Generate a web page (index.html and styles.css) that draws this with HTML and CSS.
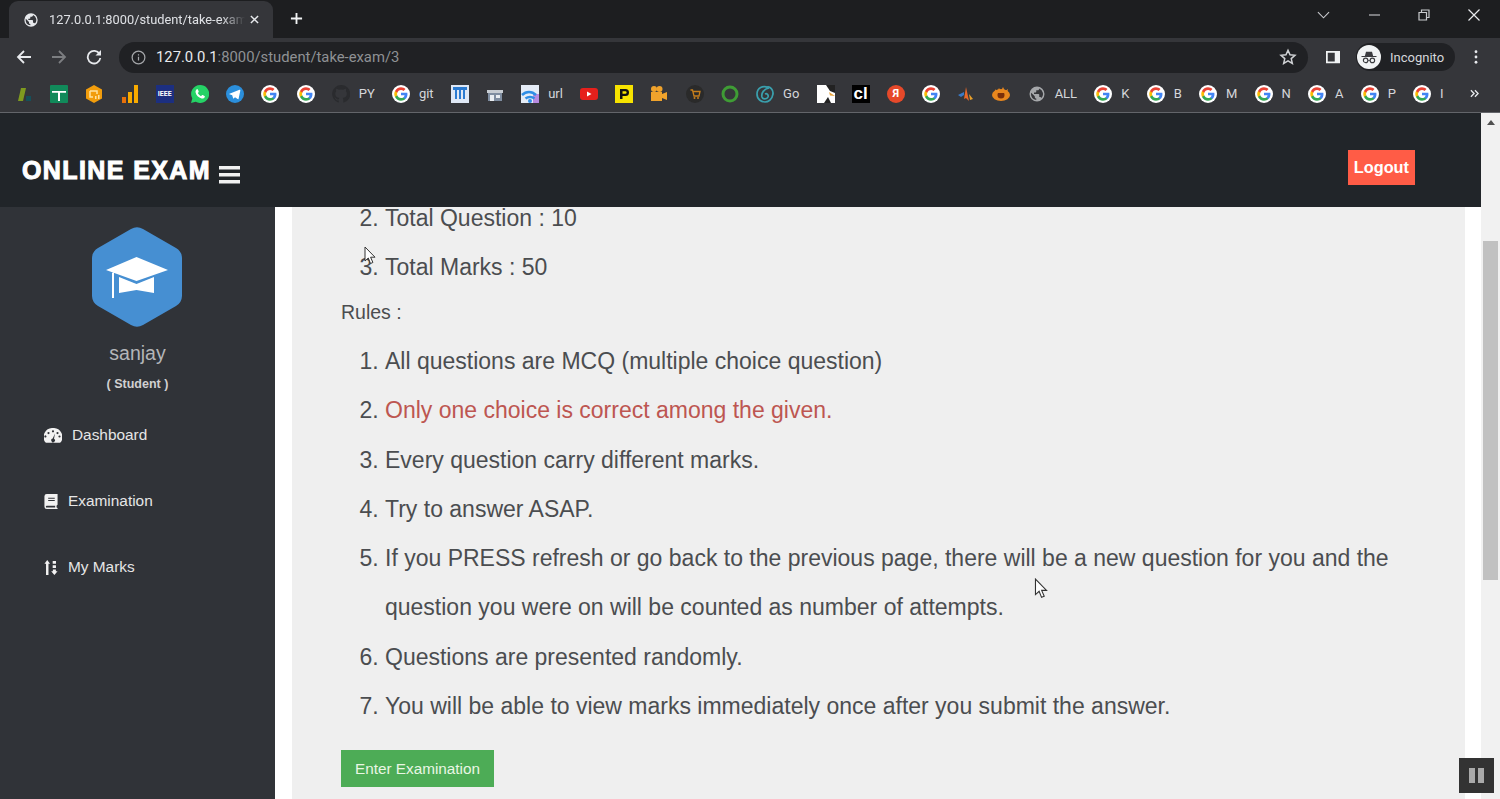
FILE: index.html
```html
<!DOCTYPE html>
<html lang="en">
<head>
    <meta charset="UTF-8">
    <meta name="viewport" content="width=device-width, initial-scale=1.0">
    <title>Online Exam</title>
    <link rel="stylesheet" href="styles.css">
</head>
<body>

    <svg class="defs" width="0" height="0">
        <symbol id="google" viewBox="0 0 24 24">
            <circle cx="12" cy="12" r="12" fill="#fff"/>
            <path fill="#4285f4" d="M20.6 12.2c0-.6-.1-1.200-.2-1.800H12v3.400h4.800c-.2 1.100-.8 2-1.800 2.700v2.200h2.900c1.700-1.600 2.700-3.800 2.700-6.500z"/>
            <path fill="#34a853" d="M12 21c2.400 0 4.500-.8 5.900-2.200L15 16.500c-.8.5-1.800.9-3 .9-2.300 0-4.300-1.600-5-3.700H4v2.300C5.500 19 8.500 21 12 21z"/>
            <path fill="#fbbc05" d="M7 13.700c-.4-1.100-.4-2.300 0-3.400V8H4c-1.300 2.500-1.300 5.500 0 8z"/>
            <path fill="#ea4335" d="M12 6.600c1.300 0 2.500.5 3.400 1.300L18 5.400C16.500 4 14.400 3 12 3 8.500 3 5.500 5 4 8l3 2.300c.7-2.100 2.700-3.700 5-3.700z"/>
        </symbol>
        <symbol id="globe" viewBox="0 0 24 24">
            <path fill="currentColor" d="M12 2a10 10 0 1 0 0 20 10 10 0 0 0 0-20zM4 12c0-.6.1-1.200.2-1.800L9 15v1c0 1.100.9 2 2 2v1.900A8 8 0 0 1 4 12zm13.900 5.400c-.3-.8-1-1.400-1.900-1.400h-1v-3c0-.6-.4-1-1-1H8v-2h2c.6 0 1-.4 1-1V7h2c1.100 0 2-.9 2-2v-.4a8 8 0 0 1 2.900 12.800z"/>
        </symbol>
    </svg>

    <div class="tab-strip">
        <div class="tab">
            <svg class="tab-icon"><use href="#globe"/></svg>
            <span class="tab-title">127.0.0.1:8000/student/take-exam/3</span>
            <svg class="tab-close" viewBox="0 0 10 10"><path d="M1 1l8 8M9 1l-8 8"/></svg>
        </div>
        <svg class="new-tab" viewBox="0 0 14 14"><path d="M7 1v12M1 7h12"/></svg>
        <div class="window-controls">
            <svg class="win-chevron" viewBox="0 0 14 8"><path d="M1 1l6 6 6-6"/></svg>
            <svg class="win-min" viewBox="0 0 12 2"><path d="M0 1h12"/></svg>
            <svg class="win-restore" viewBox="0 0 12 12"><path d="M1 3.500h7.500V11H1zM3.500 3.500V1H11v7.500H8.500"/></svg>
            <svg class="win-close" viewBox="0 0 12 12"><path d="M.5.500l11 11M11.500.500l-11 11"/></svg>
        </div>
    </div>

    <div class="toolbar">
        <svg class="nav-icon" viewBox="0 0 16 16"><path d="M15 8H2M8 2L2 8l6 6"/></svg>
        <svg class="nav-icon nav-off" viewBox="0 0 16 16"><path d="M1 8h13M8 2l6 6-6 6"/></svg>
        <svg class="nav-icon" viewBox="0 0 16 16"><path d="M13.500 5A6.300 6.300 0 1 0 14.300 9"/><path class="solid" d="M15 1v5.500H9.500z"/></svg>
        <div class="omnibox">
            <svg class="info-icon" viewBox="0 0 16 16"><circle cx="8" cy="8" r="6.800"/><path d="M8 7.200v4M8 4.400v1.400"/></svg>
            <span class="url"><b>127.0.0.1</b>:8000/student/take-exam/3</span>
            <svg class="star-icon" viewBox="0 0 24 24"><path d="M12 3l2.700 6.100 6.600.6-5 4.400 1.500 6.500L12 17.200l-5.800 3.400 1.500-6.500-5-4.400 6.600-.6z"/></svg>
        </div>
        <svg class="panel-icon" viewBox="0 0 16 16"><path fill-rule="evenodd" d="M0 1h16v14H0zM2 3v10h8V3z"/></svg>
        <div class="profile">
            <span class="avatar">
                <svg viewBox="0 0 24 24"><path d="M8 5h8l1.500 5.500H22V12H2v-1.500h4.500z"/><circle cx="7.500" cy="16.500" r="3" class="ring"/><circle cx="16.500" cy="16.500" r="3" class="ring"/><path d="M10.500 16h3v1h-3z"/></svg>
            </span>
            <span>Incognito</span>
        </div>
        <svg class="menu-dots" viewBox="0 0 4 16"><circle cx="2" cy="2" r="1.600"/><circle cx="2" cy="8" r="1.600"/><circle cx="2" cy="14" r="1.600"/></svg>
    </div>

    <div class="bookmarks">
        <svg class="bm" viewBox="0 0 18 18"><path fill="#7f9a1f" d="M3 16L6 3h5L8 16z"/><path fill="#15505a" d="M11 11h5v5h-5z"/></svg>
        <svg class="bm" viewBox="0 0 18 18"><rect width="18" height="18" rx="1" fill="#118a5a"/><path fill="#fff" d="M2 6h14v1.800h-6V16H8V7.800H2z"/></svg>
        <svg class="bm" viewBox="0 0 18 18"><path fill="#f29d0c" d="M9 0l8 4.500v9L9 18l-8-4.500v-9z"/><path fill="none" stroke="#ffe2a0" stroke-width="1.500" d="M5 6h7v3M5 6v6h3"/><path fill="#ffe2a0" d="M10 11h1.500v3H10zM13 10h1.500v4H13z"/></svg>
        <svg class="bm" viewBox="0 0 18 18"><path fill="#e8710a" d="M1 12h4v6H1z"/><path fill="#f9ab00" d="M7 7h4v11H7zM13 0h4v18h-4z"/></svg>
        <span class="bm bm-ieee">IEEE</span>
        <svg class="bm" viewBox="0 0 18 18"><path fill="#25d366" d="M9 0a9 9 0 0 0-7.700 13.500L0 18l4.700-1.200A9 9 0 1 0 9 0z"/><path fill="#fff" d="M5.500 4.500c.5-.5 1.200-.4 1.400.1l.8 1.900c.1.300 0 .6-.2.800l-.7.800c.7 1.300 1.800 2.400 3.200 3.100l.9-1c.2-.2.500-.3.800-.2l1.800.9c.4.200.5.900.2 1.400-.6 1-1.800 1.500-3.100 1.200-3.100-.8-5.500-3.200-6-6-.2-1.200.3-2.300.9-3z"/></svg>
        <svg class="bm" viewBox="0 0 18 18"><circle cx="9" cy="9" r="9" fill="#2b8fdc"/><path fill="#fff" d="M3.500 8.800l10-4c.5-.2 1 .1.800.9l-1.700 8c-.1.600-.5.700-1 .4l-2.600-1.900-1.300 1.200c-.3.300-.5.200-.6-.2l-.9-3-2.700-.9c-.5-.2-.5-.4 0-.5z"/></svg>
        <svg class="bm"><use href="#google"/></svg>
        <svg class="bm"><use href="#google"/></svg>
        <span class="bm-item"><svg class="bm" viewBox="0 0 18 18"><path fill="#2a2b2e" d="M9 0a9 9 0 0 0-2.800 17.500c.4.100.6-.2.600-.4v-1.700C4.300 16 3.700 14.300 3.700 14.300c-.4-1-1-1.300-1-1.300-.8-.6.100-.6.100-.6.900.1 1.400 1 1.400 1 .8 1.400 2.100 1 2.600.8.100-.6.300-1 .6-1.200-2-.2-4.100-1-4.100-4.400 0-1 .4-1.800.9-2.400-.1-.2-.4-1.100.1-2.400 0 0 .8-.2 2.500.9a8.700 8.700 0 0 1 4.500 0c1.700-1.100 2.500-.9 2.500-.9.500 1.300.2 2.200.1 2.400.6.600.9 1.400.9 2.400 0 3.500-2.100 4.200-4.100 4.400.3.300.6.800.6 1.700v2.500c0 .2.200.5.600.4A9 9 0 0 0 9 0z"/></svg><span class="bm-label">PY</span></span>
        <span class="bm-item"><svg class="bm"><use href="#google"/></svg><span class="bm-label">git</span></span>
        <svg class="bm" viewBox="0 0 18 18"><rect width="18" height="18" fill="#dfe8f5"/><path fill="#2b7bd1" d="M2 2h14v3h-2v9h-2V5h-2v9H8V5H6v9H4V5H2z"/></svg>
        <svg class="bm" viewBox="0 0 18 18"><path fill="#c7ccd2" d="M1 5h16v3H1z"/><path fill="#7f8da0" d="M2 8h14v8H2z"/><path fill="#e9edf1" d="M4 10h4v6H4zM10 10h4v3h-4z"/></svg>
        <span class="bm-item"><svg class="bm" viewBox="0 0 18 18"><path fill="#e5ecf6" d="M0 0h18v18H0z"/><path fill="#b78ae0" d="M12 9h6v9h-6z"/><path fill="none" stroke="#2f8ee5" stroke-width="2.500" d="M1 10c4-4 10-4 14 0M4.500 13.500c2.500-2 6.500-2 9 0"/><circle cx="9" cy="16" r="2" fill="#2f8ee5"/></svg><span class="bm-label">url</span></span>
        <svg class="bm" viewBox="0 0 18 18"><rect y="3" width="18" height="12" rx="3" fill="#e6201c"/><path fill="#fff" d="M7 6.500v5L11.500 9z"/></svg>
        <svg class="bm" viewBox="0 0 18 18"><rect width="18" height="18" fill="#f7e300"/><path fill="#111" fill-rule="evenodd" d="M5 4h5.500a3.500 3.500 0 0 1 0 7H7.500v3H5zm2.500 2.200v2.600h2.800a1.300 1.300 0 0 0 0-2.600z"/></svg>
        <svg class="bm" viewBox="0 0 18 18"><path fill="#f0a32c" d="M1 7h11v9H1zM12 9l5-2v8l-5-2z"/><circle cx="4" cy="4" r="3" fill="#f0a32c"/><circle cx="9.500" cy="4" r="3" fill="#f0a32c"/></svg>
        <svg class="bm" viewBox="0 0 18 18"><circle cx="9" cy="9" r="9" fill="#2a2a2a"/><path fill="none" stroke="#c77f1c" stroke-width="1.300" d="M4.500 5h2l1.500 6h5l1-4.500H7"/><circle cx="8.500" cy="13" r="1" fill="#c77f1c"/><circle cx="12" cy="13" r="1" fill="#c77f1c"/></svg>
        <svg class="bm" viewBox="0 0 18 18"><circle cx="9" cy="9" r="7" fill="none" stroke="#3f9c35" stroke-width="3"/></svg>
        <span class="bm-item"><svg class="bm" viewBox="0 0 18 18"><g fill="none" stroke="#3aa0ae" stroke-width="1.700"><path d="M12 2.500C7 0 1 3 1 9s5 8 8 8 7-2 8-8c.5-4-3-8-6-7"/><path d="M13 3C8 4 5 8 6 12c.7 2.500 5 2.500 6 0 .7-2-1-4-3-3"/></g></svg><span class="bm-label">Go</span></span>
        <svg class="bm" viewBox="0 0 18 18"><rect width="18" height="18" fill="#fff"/><path fill="#222" d="M9 0h9v8l-5-2z"/><path fill="#e9a43a" d="M12 7l6 4-5-.500z"/><path fill="#222" d="M7 18l4-6 3 6z"/></svg>
        <span class="bm bm-cl">cl</span>
        <span class="bm bm-ya">Я</span>
        <svg class="bm"><use href="#google"/></svg>
        <svg class="bm" viewBox="0 0 18 18"><path fill="#e8682a" d="M9 2l3 14-3-3-2 1z"/><path fill="#3a7ac8" d="M1 10l6-3v3l-3 2z"/><path fill="#e8a02a" d="M12 9l4 5-3 1z"/></svg>
        <svg class="bm" viewBox="0 0 18 18"><ellipse cx="9" cy="10" rx="9" ry="6" fill="#e8871e"/><circle cx="9" cy="10" r="3.500" fill="#7a2f0a"/><path fill="#e8871e" d="M3 4l2 3 2-4 2 3 2-4 2 4 3-2-1 4H3z"/></svg>
        <span class="bm-item"><svg class="bm bm-grey"><use href="#globe"/></svg><span class="bm-label">ALL</span></span>
        <span class="bm-item"><svg class="bm"><use href="#google"/></svg><span class="bm-label">K</span></span>
        <span class="bm-item"><svg class="bm"><use href="#google"/></svg><span class="bm-label">B</span></span>
        <span class="bm-item"><svg class="bm"><use href="#google"/></svg><span class="bm-label">M</span></span>
        <span class="bm-item"><svg class="bm"><use href="#google"/></svg><span class="bm-label">N</span></span>
        <span class="bm-item"><svg class="bm"><use href="#google"/></svg><span class="bm-label">A</span></span>
        <span class="bm-item"><svg class="bm"><use href="#google"/></svg><span class="bm-label">P</span></span>
        <span class="bm-item"><svg class="bm"><use href="#google"/></svg><span class="bm-label">I</span></span>
        <svg class="bm-more" viewBox="0 0 10 10"><path d="M1 1.500L4.500 5 1 8.500M5.500 1.500L9 5 5.500 8.500"/></svg>
    </div>

    <div class="page">
        <div class="site">
            <header class="site-header">
                <h1 class="brand">ONLINE EXAM</h1>
                <svg class="burger" viewBox="0 0 21 18"><path d="M0 0h21v3.500H0zM0 7h21v3.500H0zM0 14h21v3.500H0z"/></svg>
                <a class="logout" href="#">Logout</a>
            </header>

            <div class="site-body">
                <aside class="sidebar">
                    <svg class="hexagon" viewBox="0 0 90 100">
                        <path fill="#468fd2" d="M39 2a12 12 0 0 1 12 0l33 19a12 12 0 0 1 6 10v38a12 12 0 0 1-6 10L51 98a12 12 0 0 1-12 0L6 79a12 12 0 0 1-6-10V31a12 12 0 0 1 6-10z"/>
                        <path fill="#fff" d="M44.500 30L76 43 44.500 54 14 43zM20 46l2-.8V71h-2zM27 50l17.500 7 17.500-7v16l-17.500-3-17.500 3z"/>
                    </svg>
                    <div class="user-name">sanjay</div>
                    <div class="user-role">( Student )</div>
                    <nav class="side-nav">
                        <a class="side-link" href="#">
                            <svg class="side-icon wide" viewBox="0 0 18 15"><path fill-rule="evenodd" d="M9 0a9 9 0 0 0-7.700 14.300c.2.300.5.500.8.500h13.800c.3 0 .6-.2.800-.5A9 9 0 0 0 9 0zM9 2.200a1.100 1.100 0 1 1 0 2.200 1.100 1.100 0 0 1 0-2.200zM4.500 4a1.100 1.100 0 1 1 0 2.200A1.100 1.100 0 0 1 4.500 4zm-2 4.500a1.100 1.100 0 1 1 0-.1zM13.500 4a1.100 1.100 0 1 1 0 2.200 1.100 1.100 0 0 1 0-2.200zM11 5.500l-1 5.300a1.800 1.800 0 1 1-1.300-.2zM15.500 7.400a1.100 1.100 0 1 1 0 2.200 1.100 1.100 0 0 1 0-2.200z"/></svg>
                            Dashboard
                        </a>
                        <a class="side-link" href="#">
                            <svg class="side-icon" viewBox="0 0 14 16"><path fill-rule="evenodd" d="M2.500 0H14v11.500l-1 .8c-.2.700-.2 1.500 0 2.200l1 .3V16H2.500A2.500 2.500 0 0 1 0 13.500v-11A2.500 2.500 0 0 1 2.500 0zM4 4v1h7V4zm0 2.500v1h7v-1zM2.500 12.500a1 1 0 0 0 0 2H11.500c-.1-.7-.1-1.300 0-2z"/></svg>
                            Examination
                        </a>
                        <a class="side-link" href="#">
                            <svg class="side-icon" viewBox="0 0 14 16"><path d="M3 0l3 4H4.300v12H1.700V4H0zM8.800 1h3.500v3H8.800zM8.800 5.500h3.500v3H8.800zM9 10h3.200v2H14l-3.400 4-3.400-4H9z"/></svg>
                            My Marks
                        </a>
                    </nav>
                </aside>

                <main class="content">
                    <section class="card">
                        <ol class="exam-list" start="2">
                            <li>Total Question : 10</li>
                            <li>Total Marks : 50</li>
                        </ol>
                        <p class="rules-title">Rules :</p>
                        <ol class="exam-list">
                            <li>All questions are MCQ (multiple choice question)</li>
                            <li><span class="warn">Only one choice is correct among the given.</span></li>
                            <li>Every question carry different marks.</li>
                            <li>Try to answer ASAP.</li>
                            <li>If you PRESS refresh or go back to the previous page, there will be a new question for you and the question you were on will be counted as number of attempts.</li>
                            <li>Questions are presented randomly.</li>
                            <li>You will be able to view marks immediately once after you submit the answer.</li>
                        </ol>
                        <a class="enter-btn" href="#">Enter Examination</a>
                    </section>
                </main>
            </div>
        </div>

        <div class="scrollbar">
            <svg class="scroll-up" viewBox="0 0 10 6"><path d="M5 0l5 6H0z"/></svg>
            <div class="scroll-thumb"></div>
        </div>
    </div>

    <svg class="cursor cursor-one" viewBox="0 0 12 19"><path d="M1 1v14l3.300-3 2.200 5.500 2.400-1-2.300-5.300H11z"/></svg>
    <svg class="cursor cursor-two" viewBox="0 0 12 19"><path d="M1 1v14l3.300-3 2.200 5.500 2.400-1-2.300-5.300H11z"/></svg>
    <div class="pause-btn"><span></span><span></span></div>

</body>
</html>
```

FILE: styles.css
```css
* {
    box-sizing: border-box;
}
html, body {
    height: 100%;
}
body {
    margin: 0;
    overflow: hidden;
    font-family: "Liberation Sans", Arial, sans-serif;
    background-color: #35363a;
}
a {
    text-decoration: none;
}
.defs {
    position: absolute;
}

/* browser chrome */
.tab-strip {
    display: flex;
    align-items: flex-start;
    height: 38px;
    padding-left: 9px;
    background-color: #1d1e20;
}
.tab {
    display: flex;
    align-items: center;
    width: 264px;
    height: 37px;
    margin-top: 1px;
    padding: 0 14px 0 14px;
    border-radius: 9px 9px 0 0;
    background-color: #35363a;
    color: #dfe1e5;
}
.tab-icon {
    flex: none;
    width: 16px;
    height: 16px;
    color: #e8eaed;
}
.tab-title {
    flex: 1;
    margin-left: 10px;
    overflow: hidden;
    white-space: nowrap;
    font-family: Roboto, sans-serif;
    font-size: 12.800px;
    -webkit-mask-image: linear-gradient(to right, #000 88%, transparent 100%);
    mask-image: linear-gradient(to right, #000 88%, transparent 100%);
}
.tab-close {
    flex: none;
    width: 9px;
    height: 9px;
    margin-left: 5px;
    fill: none;
    stroke: #e8eaed;
    stroke-width: 1.600;
}
.new-tab {
    flex: none;
    width: 13px;
    height: 13px;
    margin: 12px 0 0 17px;
    fill: none;
    stroke: #f1f3f4;
    stroke-width: 2;
}
.window-controls {
    display: flex;
    align-items: center;
    height: 30px;
    margin-left: auto;
    padding-right: 20px;
    fill: none;
    stroke: #c9cbce;
    stroke-width: 1.200;
}
.win-chevron {
    width: 13px;
    height: 8px;
}
.win-min {
    width: 11px;
    height: 2px;
    margin-left: 39px;
}
.win-restore {
    width: 12px;
    height: 12px;
    margin-left: 38px;
}
.win-close {
    width: 12px;
    height: 12px;
    margin-left: 38px;
    stroke: #e8eaed;
}
.toolbar {
    display: flex;
    align-items: center;
    height: 38px;
    padding: 0 17px 0 16px;
}
.nav-icon {
    flex: none;
    width: 16px;
    height: 16px;
    margin-right: 19px;
    fill: none;
    stroke: #e8eaed;
    stroke-width: 1.800;
}
.nav-icon.nav-off {
    stroke: #7c7e81;
}
.nav-icon .solid {
    fill: #e8eaed;
    stroke: none;
}
.omnibox {
    display: flex;
    align-items: center;
    width: 1189px;
    height: 31px;
    margin-left: -2px;
    padding: 0 11px 0 12px;
    border-radius: 16px;
    background-color: #202124;
}
.info-icon {
    flex: none;
    width: 15px;
    height: 15px;
    fill: none;
    stroke: #a5a7aa;
    stroke-width: 1.300;
}
.url {
    margin-left: 10px;
    font-family: Roboto, sans-serif;
    font-size: 14.800px;
    color: #8f9194;
}
.url b {
    font-weight: 400;
    color: #e8eaed;
}
.star-icon {
    flex: none;
    width: 18px;
    height: 18px;
    margin-left: auto;
    fill: none;
    stroke: #d0d2d5;
    stroke-width: 2;
}
.panel-icon {
    flex: none;
    width: 16px;
    height: 14px;
    margin-left: 17px;
    fill: #f1f3f4;
}
.profile {
    display: flex;
    align-items: center;
    flex: none;
    gap: 9px;
    width: 99px;
    height: 28px;
    margin-left: 15px;
    padding-left: 1px;
    border-radius: 14px;
    background-color: #202124;
    font-family: Roboto, sans-serif;
    font-size: 13px;
    color: #d5d7da;
}
.avatar {
    display: flex;
    align-items: center;
    justify-content: center;
    width: 24px;
    height: 24px;
    border-radius: 50%;
    background-color: #f1f3f4;
}
.avatar svg {
    width: 18px;
    height: 18px;
    fill: #3a3b3f;
}
.avatar .ring {
    fill: none;
    stroke: #3a3b3f;
    stroke-width: 1.500;
}
.menu-dots {
    flex: none;
    width: 4px;
    height: 14px;
    margin-left: 19px;
    fill: #e8eaed;
}
.bookmarks {
    display: flex;
    align-items: center;
    gap: 17.200px;
    height: 37px;
    padding: 0 0 1px 15px;
    border-bottom: 1px solid #63656a;
    font-family: Roboto, sans-serif;
    font-size: 13px;
    color: #d5d7da;
}
.bm {
    flex: none;
    display: block;
    width: 18px;
    height: 18px;
}
.bm-item {
    display: flex;
    align-items: center;
    flex: none;
    gap: 9px;
}
.bm-label {
    white-space: nowrap;
}
.bm-ieee {
    background-color: #1c2f80;
    font-size: 7px;
    font-weight: 700;
    line-height: 18px;
    text-align: center;
    color: #fff;
}
.bm-cl {
    background-color: #000;
    font-family: "Liberation Sans", sans-serif;
    font-size: 17px;
    font-weight: 700;
    line-height: 17px;
    text-align: center;
    color: #fff;
}
.bm-ya {
    border-radius: 50%;
    background-color: #e6492a;
    font-size: 11px;
    font-weight: 700;
    line-height: 18px;
    text-align: center;
    color: #fff;
}
.bm-grey {
    color: #a5a7aa;
}
.bm-more {
    flex: none;
    width: 9px;
    height: 9px;
    margin-left: auto;
    margin-right: 21px;
    fill: none;
    stroke: #e8eaed;
    stroke-width: 1.500;
}

/* site */
.page {
    display: flex;
    height: 686px;
    background-color: #fff;
}
.site {
    display: flex;
    flex-direction: column;
    width: 1481px;
}
.site-header {
    display: flex;
    align-items: center;
    flex: none;
    height: 94px;
    padding: 15px 66px 0 22px;
    background-color: #212529;
}
.brand {
    margin: 0;
    padding-top: 6px;
    font-size: 25px;
    font-weight: 700;
    letter-spacing: 1.400px;
    white-space: nowrap;
    color: #fff;
    -webkit-text-stroke: 1px #fff;
}
.burger {
    flex: none;
    width: 21px;
    height: 18px;
    margin: 15px 0 0 8px;
    fill: #f1f1f1;
}
.logout {
    margin-left: auto;
    padding: 9px 6px;
    background-color: #ff5c46;
    font-size: 16.300px;
    font-weight: 700;
    line-height: 17px;
    color: #fff;
}
.site-body {
    display: flex;
    flex: 1;
    min-height: 0;
}
.sidebar {
    display: flex;
    flex-direction: column;
    align-items: center;
    flex: none;
    width: 275px;
    padding-top: 20px;
    background-color: #303338;
}
.hexagon {
    flex: none;
    width: 90px;
    height: 100px;
    margin-right: 2px;
}
.user-name {
    margin-top: 15px;
    font-size: 19.500px;
    color: #b4b6b9;
}
.user-role {
    margin-top: 12px;
    font-size: 12.500px;
    font-weight: 700;
    color: #d0d0d0;
}
.side-nav {
    display: flex;
    flex-direction: column;
    gap: 48px;
    align-self: stretch;
    margin-top: 35px;
    padding-left: 44px;
}
.side-link {
    display: flex;
    align-items: center;
    gap: 10px;
    height: 18px;
    font-size: 15.400px;
    color: #e6e6e6;
}
.side-icon {
    flex: none;
    width: 14px;
    height: 15px;
    fill: #f2f2f2;
}
.side-icon.wide {
    width: 18px;
}
.content {
    flex: 1;
    min-width: 0;
    padding: 0 16px 0 17px;
    overflow: hidden;
}
.card {
    display: flow-root;
    height: 100%;
    padding: 0 49px;
    background-color: #efefef;
    color: #4b4d50;
}
.exam-list {
    margin: 0;
    padding-left: 44px;
    font-size: 23px;
    line-height: 49.300px;
}
.card > .exam-list:first-child {
    margin-top: -13px;
}
.warn {
    color: #bd5651;
}
.rules-title {
    margin: 0 0 5.400px;
    font-size: 19.500px;
    line-height: 39px;
}
.enter-btn {
    display: inline-block;
    margin-top: 18.600px;
    padding: 0 14px;
    background-color: #4dac56;
    font-size: 15.300px;
    line-height: 37px;
    color: #e9f6e4;
}
.scrollbar {
    display: flex;
    flex-direction: column;
    align-items: center;
    width: 19px;
    background-color: #f1f1f1;
}
.scroll-up {
    flex: none;
    width: 8px;
    height: 5px;
    margin-top: 7px;
    fill: #505050;
}
.scroll-thumb {
    flex: none;
    width: 15px;
    height: 339px;
    margin-top: 116px;
    background-color: #c1c1c1;
}

/* overlays from the screen recording */
.cursor {
    position: absolute;
    fill: #fff;
    stroke: #333;
    stroke-width: 1;
}
.cursor-one {
    left: 364px;
    top: 246px;
    width: 12px;
    height: 19px;
}
.cursor-two {
    left: 1034px;
    top: 578px;
    width: 14px;
    height: 21px;
}
.pause-btn {
    position: absolute;
    left: 1459px;
    top: 758px;
    display: flex;
    align-items: center;
    justify-content: center;
    gap: 3px;
    width: 35px;
    height: 35px;
    background-color: #333;
}
.pause-btn span {
    width: 6px;
    height: 15px;
    background-color: #aaa;
}
```
